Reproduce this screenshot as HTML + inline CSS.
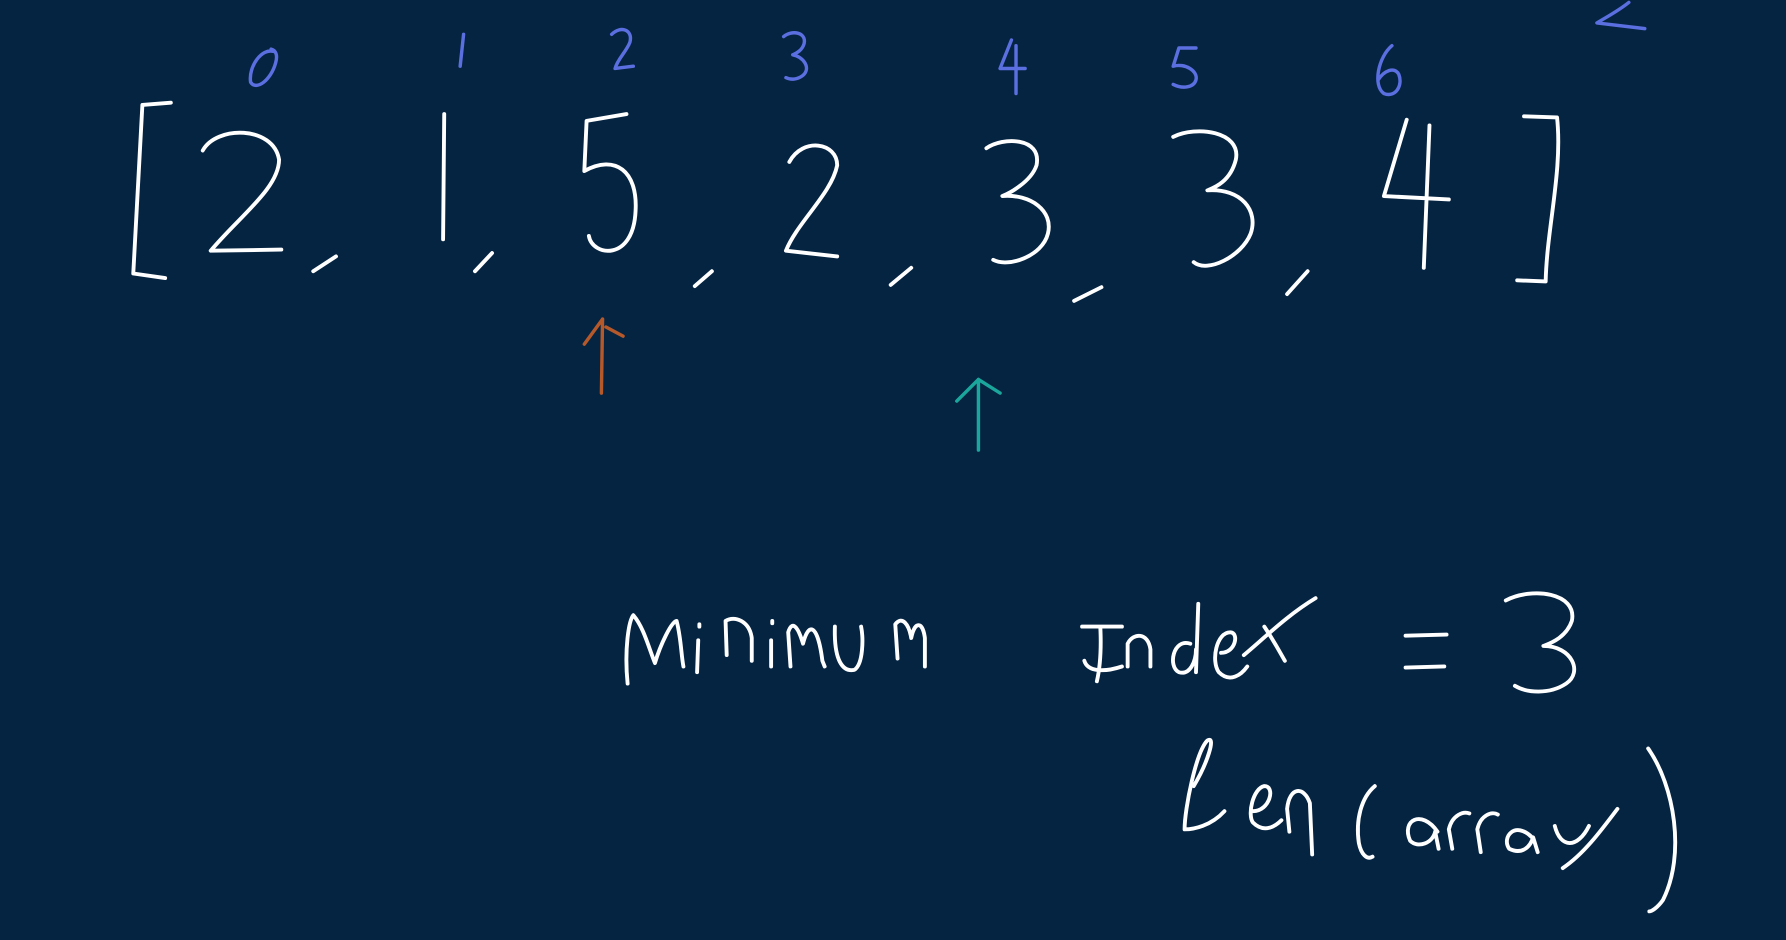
<!DOCTYPE html>
<html><head><meta charset="utf-8"><style>
html,body{margin:0;padding:0;background:#052442;width:1786px;height:940px;overflow:hidden}
svg{display:block}
</style></head><body>
<svg width="1786" height="940" viewBox="0 0 1568 825" xmlns="http://www.w3.org/2000/svg">
<rect width="1568" height="825" fill="#052442"/>
<g fill="none" stroke="#fff" stroke-width="3.4" stroke-linecap="round" stroke-linejoin="round">
<path d="M150 90 L125 92 L117 240 L145 244"/>
<path d="M178 132 C190 110 240 110 245 140 C245 165 210 190 185 220 L247 219"/>
<path d="M275 238 L295 225"/>
<path d="M390 100 L389 210"/>
<path d="M417 238 L432 222"/>
<path d="M550 100 L515 106 L513 150 C540 135 560 150 558 185 C556 230 520 225 517 207"/>
<path d="M610 251 L625 238"/>
<path d="M693 142 C705 120 735 125 735 145 C730 170 700 195 690 220 L735 225"/>
<path d="M782 250 L800 235"/>
<path d="M866 130 C880 120 915 120 910 145 C905 160 885 170 880 172 C905 170 925 185 920 205 C915 225 885 235 872 228"/>
<path d="M943 264 L967 252"/>
<path d="M1030 120 C1050 110 1090 115 1085 140 C1080 160 1065 165 1060 167 C1090 165 1105 185 1098 205 C1090 225 1060 240 1048 230"/>
<path d="M1130 258 L1148 238"/>
<path d="M1235 105 L1215 172 L1272 175 M1255 110 L1250 235"/>
<path d="M1338 102 L1367 103 C1372 150 1358 200 1357 247 L1332 246"/>
<!-- bottom handwriting -->
<path d="M551 600 C548 570 552 545 556 540 C565 550 570 570 575 582 C580 565 590 545 594 545 C598 560 598 575 600 585"/>
<path d="M613 562 L612 590 M614 548 L614 550"/>
<path d="M638 575 L637 545 C645 540 658 545 660 560 L660 580"/>
<path d="M677 562 L677 585 M678 545 L678 547"/>
<path d="M694 585 L692 555 C695 545 700 548 705 565 C710 545 718 548 722 580 L724 585"/>
<path d="M733 550 C732 580 740 590 750 588 C758 583 758 560 756 550"/>
<path d="M788 578 L786 548 C792 540 798 548 800 560 C803 545 810 545 812 560 L812 585"/>
<path d="M950 550 L985 550 M966 550 C967 570 966 585 963 598 M952 580 C955 590 970 590 985 585"/>
<path d="M990 585 L990 565 C995 555 1008 555 1010 570 L1010 585"/>
<path d="M1045 565 C1030 560 1025 585 1035 590 C1045 593 1050 580 1050 570 M1052 530 L1050 590"/>
<path d="M1072 573 C1085 573 1088 555 1080 555 C1068 555 1063 580 1070 590 C1080 600 1090 592 1095 585"/>
<path d="M1092 575 C1110 560 1130 540 1155 525 M1110 550 C1120 565 1125 575 1128 580"/>
<path d="M1234 558 L1270 557 M1234 586 L1268 585"/>
<path d="M1322 527 C1345 515 1385 520 1380 545 C1375 560 1360 565 1355 567 C1380 567 1390 590 1375 600 C1360 610 1340 608 1330 602"/>
<path d="M1048 690 C1060 670 1068 645 1060 650 C1050 660 1040 710 1040 728 C1048 728 1063 725 1075 712"/>
<path d="M1100 712 C1115 712 1120 690 1110 690 C1100 692 1095 715 1100 722 C1110 732 1120 725 1125 720"/>
<path d="M1132 730 L1130 710 C1132 690 1145 690 1150 705 L1152 750"/>
<path d="M1207 690 C1195 700 1190 720 1193 740 C1195 750 1200 755 1205 752"/>
<path d="M1262 730 C1248 710 1230 720 1238 738 C1245 745 1258 740 1260 730 L1263 745"/>
<path d="M1275 745 L1272 728 C1275 715 1285 712 1290 714"/>
<path d="M1300 748 L1297 728 C1300 715 1310 712 1315 715"/>
<path d="M1345 735 C1330 720 1318 735 1325 745 C1335 750 1343 745 1346 735 L1350 748"/>
<path d="M1365 725 C1370 745 1385 745 1395 725 M1420 710 C1405 730 1390 750 1372 762"/>
<path d="M1447 657 C1470 690 1480 750 1460 790 C1455 797 1450 800 1448 800"/>
</g>
<g fill="none" stroke="#5c6fe0" stroke-width="3" stroke-linecap="round" stroke-linejoin="round">
<path d="M240 45 C230 42 218 58 220 72 C225 80 238 70 242 55 C244 48 242 44 238 43"/>
<path d="M407 30 L404 58"/>
<path d="M537 30 C545 22 556 26 553 37 C550 45 542 52 540 60 L556 58"/>
<path d="M688 32 C695 26 708 28 706 38 C704 45 698 47 696 48 C706 50 712 60 705 66 C700 70 694 70 690 68"/>
<path d="M888 35 L878 60 L900 60 M892 40 L892 82"/>
<path d="M1050 42 L1035 42 L1030 58 C1040 55 1052 62 1050 70 C1048 77 1038 78 1030 74"/>
<path d="M1222 40 C1210 50 1205 75 1215 82 C1225 86 1232 75 1228 65 C1224 58 1215 62 1210 70"/>
<path d="M1430 2 C1420 10 1410 15 1402 20 L1444 25"/>
</g>
<g fill="none" stroke="#b5582a" stroke-width="3" stroke-linecap="round"><path d="M528 345 L529 280 M529 280 L513 302 M532 287 L547 295"/></g>
<g fill="none" stroke="#1ba69c" stroke-width="3" stroke-linecap="round"><path d="M859 395 L859 333 M859 333 L840 352 M859 333 L878 345"/></g>
</svg>
</body></html>
